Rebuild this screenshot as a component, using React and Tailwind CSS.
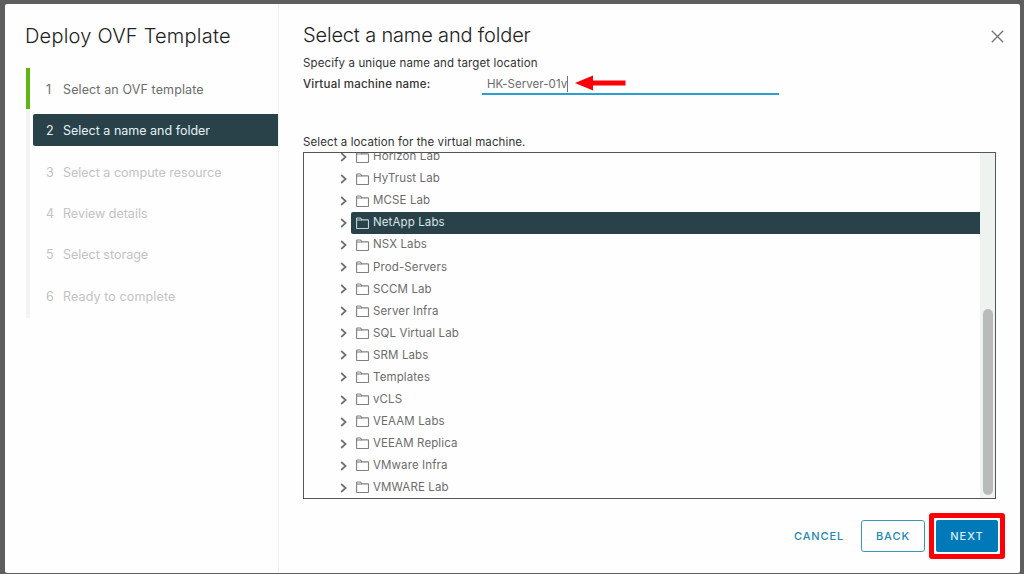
import React from "react";

const steps = [
  { n: "1", label: "Select an OVF template", text: "text-[#6c6c6c]", box: "", spacing: "tracking-[0.12px]" },
  { n: "2", label: "Select a name and folder", text: "text-[#e6f1f3]", box: "bg-[#29424a]", spacing: "tracking-[0px]" },
  { n: "3", label: "Select a compute resource", text: "text-[#c3c3c3]", box: "", spacing: "tracking-[0px]" },
  { n: "4", label: "Review details", text: "text-[#c3c3c3]", box: "", spacing: "tracking-[0px]" },
  { n: "5", label: "Select storage", text: "text-[#c3c3c3]", box: "", spacing: "tracking-[0px]" },
  { n: "6", label: "Ready to complete", text: "text-[#c3c3c3]", box: "", spacing: "tracking-[0.12px]" },
];

const folders = [
  "Horizon Lab",
  "HyTrust Lab",
  "MCSE Lab",
  "NetApp Labs",
  "NSX Labs",
  "Prod-Servers",
  "SCCM Lab",
  "Server Infra",
  "SQL Virtual Lab",
  "SRM Labs",
  "Templates",
  "vCLS",
  "VEAAM Labs",
  "VEEAM Replica",
  "VMware Infra",
  "VMWARE Lab",
];

function Chevron() {
  return (
    <svg width="8" height="10" viewBox="0 0 8 10" fill="none" stroke="#707070" strokeWidth="1.7">
      <path d="M1.2 1 L5.6 5 L1.2 9" />
    </svg>
  );
}

function Folder({ selected }) {
  return (
    <svg
      width="14"
      height="13"
      viewBox="0 0 14 13"
      fill="none"
      stroke={selected ? "#c3d2d5" : "#808080"}
      strokeWidth="1.1"
      strokeLinejoin="round"
    >
      <path d="M0.6 10.9 V1.6 Q0.6 1 1.2 1 H4.4 L6 2.9 H11.9 Q12.5 2.9 12.5 3.5 V10.9 Q12.5 11.5 11.9 11.5 H1.2 Q0.6 11.5 0.6 10.9 Z" />
      <path d="M0.6 3 H6" />
    </svg>
  );
}

function TreeRow({ name, selected }) {
  return (
    <div className="flex h-[22.05px] shrink-0 items-center">
      <div className="flex w-[47px] shrink-0 justify-end pr-[3px]">
        <Chevron />
      </div>
      <div
        className={
          selected
            ? "flex h-full grow items-center rounded-l-[2px] bg-[#29424a] pl-[5px] text-[#d9e6e8]"
            : "flex h-full grow items-center pl-[5px] text-[#6c6c6c]"
        }
      >
        <span className="flex w-[17px] shrink-0">
          <Folder selected={selected} />
        </span>
        <span className="text-[11.5px] leading-none tracking-[0.12px]">{name}</span>
      </div>
    </div>
  );
}

export default function App() {
  return (
    <div className="h-[574px] w-[1024px] overflow-hidden bg-[#5e5e5e] pt-[4px] pl-[5px] font-['Inter',sans-serif]">
      <div className="flex h-[569px] w-[1015px] overflow-hidden rounded-[2px] bg-[#fefefe]">
        <aside className="flex w-[274px] shrink-0 flex-col border-r border-[#efefef] pt-[20px] pl-[21px]">
          <h1 className="-ml-px text-[20px] leading-[24px] font-light tracking-[0.22px] whitespace-nowrap text-[#222]">
            Deploy OVF Template
          </h1>
          <div className="mt-[20px] flex">
            <div className="flex h-[250px] w-[4px] shrink-0 flex-col bg-[#f3f3f3]">
              <div className="h-[41px] bg-[#60b515]" />
            </div>
            <ol className="flex grow flex-col pl-[3px]">
              {steps.map((s) => (
                <li key={s.n} className="flex h-[41.4px] items-center">
                  <div className={`flex h-[32px] grow items-center rounded-l-[2px] pt-[3px] pl-[13px] text-[12.5px] ${s.text} ${s.box}`}>
                    <span className="w-[17px]">{s.n}</span>
                    <span className={`whitespace-nowrap ${s.spacing}`}>{s.label}</span>
                  </div>
                </li>
              ))}
            </ol>
          </div>
        </aside>

        <main className="flex grow flex-col pl-[24px]">
          <div className="flex h-[48px] justify-between pt-[19px] pr-[16px]">
            <h2 className="text-[20px] leading-[24px] font-light tracking-[-0.16px] text-[#222]">Select a name and folder</h2>
            <svg className="mt-[7px]" width="13" height="13" viewBox="0 0 13 13" stroke="#777" strokeWidth="1.4">
              <path d="M0.8 0.8 L12.2 12.2 M12.2 0.8 L0.8 12.2" />
            </svg>
          </div>
          <p className="h-[21px] pt-[1px] text-[11.5px] leading-[20px] tracking-[0.13px] text-[#333]">
            Specify a unique name and target location
          </p>
          <div className="flex h-[22px]">
            <label className="w-[179px] pt-[1px] text-[11.5px] leading-[20px] font-medium tracking-[0.22px] text-[#333]">
              Virtual machine name:
            </label>
            <div className="flex w-[297px] border-b-2 border-[#2b9fd0] pl-[5px]">
              <span className="mt-[3px] mb-px border-r border-[#777] text-[11.5px] leading-[16px] tracking-[0.06px] text-[#6c6c6c]">
                HK-Server-01v
              </span>
              <svg className="mt-[2px] ml-[7px]" width="51" height="16" viewBox="0 0 51 16" fill="#fb0007">
                <path d="M0 8 L18 0.5 V5.6 H50.5 V10.4 H18 V15.5 Z" />
              </svg>
            </div>
          </div>
          <p className="mt-[36px] h-[21px] pt-[1px] text-[11.5px] leading-[20px] tracking-[0.1px] text-[#333]">
            Select a location for the virtual machine.
          </p>
          <div className="flex h-[347px] w-[693px] overflow-hidden border border-[#555]">
            <div className="-mt-[7px] flex grow flex-col">
              {folders.map((f) => (
                <TreeRow key={f} name={f} selected={f === "NetApp Labs"} />
              ))}
            </div>
            <div className="flex w-[15px] shrink-0 flex-col justify-end bg-[#eff3ef] pb-[3px] pl-[3px]">
              <div className="h-[186px] w-[10px] rounded-full bg-[#bababa]" />
            </div>
          </div>
          <div className="mt-[14px] flex items-center justify-end pr-[15px] text-[11px] font-medium">
            <span className="mr-[17px] tracking-[0.85px] text-[#2287b5]">CANCEL</span>
            <button className="mr-[4px] h-[32px] w-[64px] rounded-[3px] border border-[#3d95be] tracking-[1px] text-[#2287b5]">
              BACK
            </button>
            <div className="h-[46px] w-[76px] rounded-[3px] border-[5px] border-[#fb0007] p-[2px]">
              <button className="h-full w-full rounded-[2px] bg-[#0079b8] tracking-[1px] text-[#d9edf7]">NEXT</button>
            </div>
          </div>
        </main>
      </div>
    </div>
  );
}
